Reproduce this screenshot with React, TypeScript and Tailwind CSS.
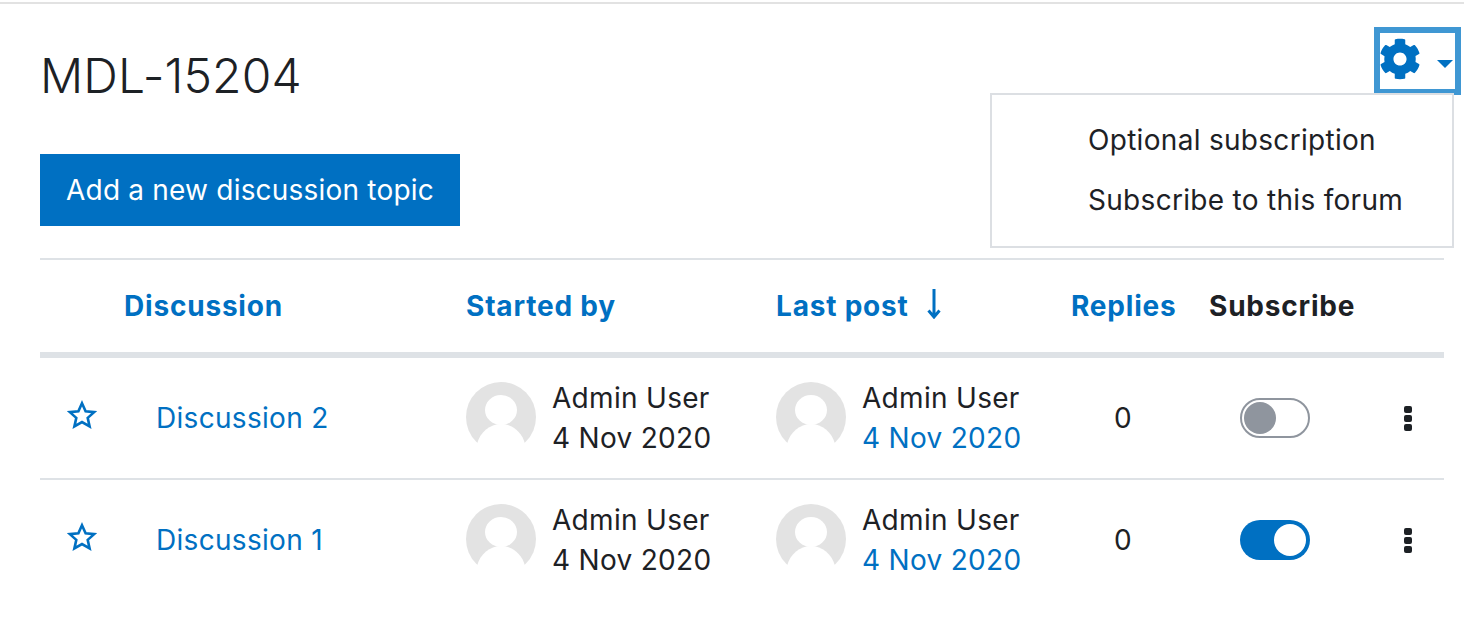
import React from 'react';
import { FaCog } from 'react-icons/fa';

const blue = 'text-[#0070c2]';

function Avatar() {
  return (
    <svg width="70" height="70" viewBox="0 0 70 70" className="shrink-0 -mt-[2px]">
      <circle cx="35" cy="35" r="35" fill="#e3e3e3" />
      <ellipse cx="35" cy="28" rx="16" ry="15" fill="#fff" />
      <path d="M11 62C14 50 24 42 35 42s21 8 24 20c-6 5-15 8-24 8s-18-3-24-8z" fill="#fff" />
      <path d="M0 66h70v4H0z" fill="#fff" />
    </svg>
  );
}

function Star() {
  return (
    <svg width="30" height="30" viewBox="0 0 30 30" fill="none" stroke="#0070c2" strokeWidth="2.6">
      <path d="M15 3.2l3.6 8 8.600.9-6.500 5.800 1.900 8.500-7.600-4.400-7.600 4.400 1.900-8.500-6.500-5.800 8.600-.9z" />
    </svg>
  );
}

function Dots() {
  return (
    <div className="flex flex-col gap-[2px]">
      <div className="w-[8px] h-[7px] rounded-[2px] bg-[#1d2125]" />
      <div className="w-[8px] h-[7px] rounded-[2px] bg-[#1d2125]" />
      <div className="w-[8px] h-[7px] rounded-[2px] bg-[#1d2125]" />
    </div>
  );
}

function Toggle({ on }: { on: boolean }) {
  if (on) {
    return (
      <div className="w-[70px] h-[40px] rounded-full bg-[#0070c2] flex items-center justify-end pr-[4px]">
        <div className="w-[32px] h-[32px] rounded-full bg-white" />
      </div>
    );
  }
  return (
    <div className="w-[70px] h-[40px] rounded-full border-2 border-[#8f959e] bg-white flex items-center pl-[2px]">
      <div className="w-[32px] h-[32px] rounded-full bg-[#8f959e]" />
    </div>
  );
}

function Person({ link }: { link?: boolean }) {
  return (
    <div className="flex items-center gap-[17px]">
      <Avatar />
      <div className="leading-[40px] -ml-[1px]">
        <div>Admin User</div>
        <div className={link ? blue : ''}>4 Nov 2020</div>
      </div>
    </div>
  );
}

const cols = 'grid grid-cols-[84px_342px_310px_295px_138px_185px_50px] items-center';

function Row({ name, on }: { name: string; on: boolean }) {
  return (
    <div className={`${cols} h-[122px] border-b-2 border-[#dee2e6] last:h-[120px] last:border-b-0`}>
      <div className="pl-[27px] flex -mt-[6px]"><Star /></div>
      <div className={`${blue} pl-[32px]`}>{name}</div>
      <Person />
      <Person link />
      <div className="pl-[43px]">0</div>
      <div className="pl-[31px]"><Toggle on={on} /></div>
      <div className="flex pl-[10px]"><Dots /></div>
    </div>
  );
}

export default function App() {
  return (
    <div className="relative w-[1464px] h-[618px] overflow-hidden bg-white text-[#1d2125] text-[28px] tracking-[0.3px] font-['Inter','Liberation_Sans',sans-serif]">
      <div className="h-[2px] mt-[2px] bg-[#e2e2e2]" />

      <div className="pl-[40px] pr-[20px]">
        <h1 className="mt-[42px] text-[48px] leading-[60px] font-light tracking-[0.1px]">MDL-15204</h1>
        <button className="mt-[48px] w-[420px] h-[72px] bg-[#0070c2] text-white text-center tracking-[0.2px]">
          Add a new discussion topic
        </button>

        <div className="mt-[32px] border-t-2 border-[#dee2e6]">
          <div className={`${cols} h-[98px] font-bold tracking-[0.8px] border-b-[6px] border-[#dee2e6]`}>
            <div />
            <div className={blue}>Discussion</div>
            <div className={blue}>Started by</div>
            <div className={`${blue} flex items-center gap-[18px]`}>
              Last post
              <svg width="14" height="30" viewBox="0 0 14 30" fill="none" stroke="#0070c2" strokeWidth="3" className="-mt-[5px]">
                <path d="M7 0v28M1.500 21.500L7 28l5.500-6.500" />
              </svg>
            </div>
            <div className={blue}>Replies</div>
            <div>Subscribe</div>
            <div />
          </div>
          <Row name="Discussion 2" on={false} />
          <Row name="Discussion 1" on />
        </div>
      </div>

      {/* settings menu */}
      <div className="absolute left-[1374px] top-[27px] w-[87px] h-[68px] border-[6px] border-[#3f97d3] flex items-center justify-between">
        <FaCog size={42} color="#0070c2" className="-ml-[1px] -mt-[5px]" />
        <div className="w-0 h-0 mt-[6px] mr-[2px] border-l-[8px] border-r-[8px] border-t-[8px] border-l-transparent border-r-transparent border-t-[#0070c2]" />
      </div>

      <div className="absolute left-[990px] top-[93px] w-[464px] h-[155px] border-2 border-[#dcdfe3] bg-white pl-[96px] pt-[15px] leading-[60px]">
        <div>Optional subscription</div>
        <div>Subscribe to this forum</div>
      </div>
    </div>
  );
}
